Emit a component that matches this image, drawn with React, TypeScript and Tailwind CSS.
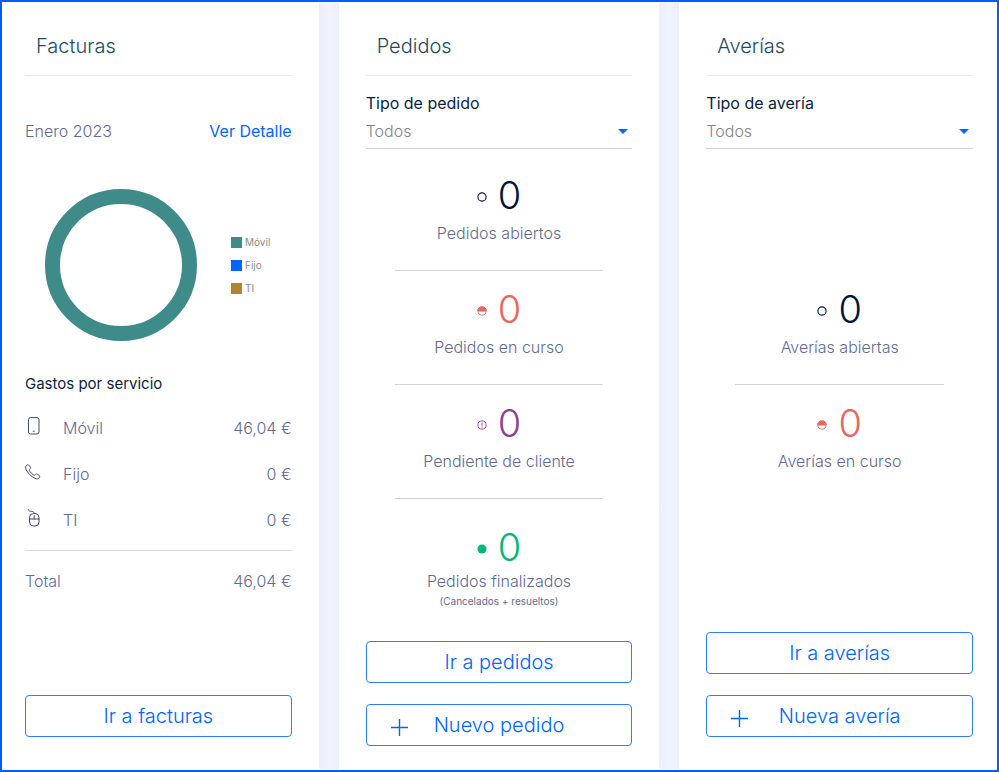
import * as React from "react"

type StatusKind = "open" | "progress" | "waiting" | "done"

interface Stat {
  kind: StatusKind
  value: number
  label: string
  note?: string
}

const ORDER_STATS: Stat[] = [
  { kind: "open", value: 0, label: "Pedidos abiertos" },
  { kind: "progress", value: 0, label: "Pedidos en curso" },
  { kind: "waiting", value: 0, label: "Pendiente de cliente" },
  { kind: "done", value: 0, label: "Pedidos finalizados", note: "(Cancelados + resueltos)" },
]

const FAULT_STATS: Stat[] = [
  { kind: "open", value: 0, label: "Averías abiertas" },
  { kind: "progress", value: 0, label: "Averías en curso" },
]

const STATUS_COLORS: Record<StatusKind, string> = {
  open: "text-[#00143a]",
  progress: "text-[#e9665e]",
  waiting: "text-[#8f3f97]",
  done: "text-[#00b67a]",
}

const SERVICES = [
  { name: "Móvil", amount: "46,04 €", icon: <MobileIcon /> },
  { name: "Fijo", amount: "0 €", icon: <PhoneIcon /> },
  { name: "TI", amount: "0 €", icon: <MouseIcon /> },
]

const LEGEND = [
  { name: "Móvil", swatch: "bg-[#3f8b8a]" },
  { name: "Fijo", swatch: "bg-[#0066ff]" },
  { name: "TI", swatch: "bg-[#b0862b]" },
]

export default function App() {
  return (
    <main className="flex min-h-screen border-2 border-[#005eff] bg-white py-px font-['Inter',sans-serif] text-base font-light text-[#5f6b90]">
      <section className="flex flex-1 flex-col bg-white pr-[27px] pb-8 pl-[23px]">
        <CardTitle>Facturas</CardTitle>
        <Invoices />
        <div className="mt-auto pt-6">
          <ActionButton>Ir a facturas</ActionButton>
        </div>
      </section>
      <Gutter />
      <section className="flex flex-1 flex-col bg-white px-[27px] pb-[23px]">
        <CardTitle>Pedidos</CardTitle>
        <TypeSelect id="order-type" label="Tipo de pedido" />
        <div className="mt-2">
          <StatList stats={ORDER_STATS} />
        </div>
        <div className="mt-auto flex flex-col gap-[21px] pt-6">
          <ActionButton>Ir a pedidos</ActionButton>
          <ActionButton plus>Nuevo pedido</ActionButton>
        </div>
      </section>
      <Gutter />
      <section className="flex flex-1 flex-col bg-white pr-6 pb-8 pl-[27px]">
        <CardTitle>Averías</CardTitle>
        <TypeSelect id="fault-type" label="Tipo de avería" />
        <div className="mt-[122px]">
          <StatList stats={FAULT_STATS} />
        </div>
        <div className="mt-auto flex flex-col gap-[21px] pt-6">
          <ActionButton>Ir a averías</ActionButton>
          <ActionButton plus>Nueva avería</ActionButton>
        </div>
      </section>
    </main>
  )
}

function Gutter() {
  return (
    <div
      className="w-5 flex-none bg-linear-to-r from-[#eceefc] via-[#f1f3ff] to-[#eceefc]"
      aria-hidden
    />
  )
}

function CardTitle({ children }: { children: React.ReactNode }) {
  return (
    <h2 className="border-b border-[#eaeaea] px-[11px] pt-[29px] pb-[15px] text-xl leading-7 text-[#1f4a5e]">
      {children}
    </h2>
  )
}

function Invoices() {
  return (
    <>
      <div className="mt-[43px] flex items-center justify-between leading-6">
        <span>Enero 2023</span>
        <a href="#detalle" className="font-normal text-[#0066ff]">
          Ver Detalle
        </a>
      </div>

      <div className="mt-[46px] flex items-center gap-[34px] pl-5">
        <svg className="size-[152px] flex-none" viewBox="0 0 152 152" aria-hidden>
          <circle cx="76" cy="76" r="68.5" fill="none" stroke="#3f8b8a" strokeWidth="15" />
        </svg>
        <ul className="flex flex-col gap-[7px] text-[10px] leading-4 font-normal text-[#8b8b8b]">
          {LEGEND.map((item) => (
            <li key={item.name} className="flex items-center gap-[3px]">
              <span className={`size-[11px] ${item.swatch}`} />
              {item.name}
            </li>
          ))}
        </ul>
      </div>

      <h3 className="mt-[31px] text-[15px] leading-6 font-normal text-[#0b1f3f]">
        Gastos por servicio
      </h3>
      <table className="mt-[9px] w-full">
        <tbody>
          {SERVICES.map((service) => (
            <tr key={service.name} className="h-[46px]">
              <td className="w-[38px] pb-1 text-[#3c4c6a]">{service.icon}</td>
              <th scope="row" className="text-left font-light">
                {service.name}
              </th>
              <td className="text-right">{service.amount}</td>
            </tr>
          ))}
        </tbody>
      </table>
      <div className="mt-[7px] flex justify-between border-t border-[#dcdcdc] pt-[18px] leading-6">
        <span>Total</span>
        <span>46,04 €</span>
      </div>
    </>
  )
}

function TypeSelect({ id, label }: { id: string; label: string }) {
  return (
    <div className="border-b border-[#d4d4d4] pt-[15px]">
      <label htmlFor={id} className="block leading-6 font-normal text-[#0b1f3f]">
        {label}
      </label>
      <div className="relative pb-px">
        <select
          id={id}
          className="h-8 w-full appearance-none bg-transparent text-base font-light text-[#838383] outline-none"
        >
          <option>Todos</option>
        </select>
        <svg
          className="pointer-events-none absolute top-[14px] right-1 h-[5px] w-[10px]"
          viewBox="0 0 10 5"
          aria-hidden
        >
          <path d="M0 0h10L5 5z" fill="#0066ff" />
        </svg>
      </div>
    </div>
  )
}

function StatList({ stats }: { stats: Stat[] }) {
  return (
    <ul className="mx-[29px] divide-y divide-[#d4d4d4]">
      {stats.map((stat) => (
        <li
          key={stat.label}
          className={`text-center ${stat.note ? "pt-7" : "pt-[18px] pb-[23px]"}`}
        >
          <div
            className={`flex items-center justify-center gap-[11px] text-[38px] leading-10 ${STATUS_COLORS[stat.kind]}`}
          >
            <StatusIcon kind={stat.kind} />
            {stat.value}
          </div>
          <p className={stat.note ? "pt-[2px] leading-6" : "pt-1 leading-7"}>{stat.label}</p>
          {stat.note && <p className="text-[10px] leading-4 font-normal">{stat.note}</p>}
        </li>
      ))}
    </ul>
  )
}

function StatusIcon({ kind }: { kind: StatusKind }) {
  return (
    <svg className="mt-1 size-[10px]" viewBox="0 0 10 10" fill="none" stroke="currentColor" aria-hidden>
      {kind === "done" ? (
        <circle cx="5" cy="5" r="4.5" fill="currentColor" stroke="none" />
      ) : (
        <circle cx="5" cy="5" r="4.1" strokeWidth={kind === "open" ? 1.1 : 0.9} />
      )}
      {kind === "progress" && <path d="M.9 5a4.1 4.1 0 0 1 8.2 0z" fill="currentColor" />}
      {kind === "waiting" && <path d="M5 2.4v3.4M5 6.6v1" strokeWidth="0.9" />}
    </svg>
  )
}

function ActionButton({ plus, children }: { plus?: boolean; children: React.ReactNode }) {
  return (
    <button
      type="button"
      className="relative h-[42px] w-full rounded border border-[#2d7dff] text-xl text-[#0066ff]"
    >
      {plus && (
        <svg
          className="absolute top-[14px] left-6 size-[17px]"
          viewBox="0 0 17 17"
          stroke="currentColor"
          strokeWidth="1.4"
          aria-hidden
        >
          <path d="M8.5 0v17M0 8.5h17" />
        </svg>
      )}
      {children}
    </button>
  )
}

function MobileIcon() {
  return (
    <svg className="size-[18px]" viewBox="0 0 18 18" fill="none" stroke="currentColor" aria-hidden>
      <rect x="3.500" y=".6" width="10.500" height="16.400" rx="2" />
      <path d="M8.200 14.200h1.100" strokeLinecap="round" />
    </svg>
  )
}

function PhoneIcon() {
  return (
    <svg
      className="size-4"
      viewBox="0 0 18 18"
      fill="none"
      stroke="currentColor"
      strokeWidth="1.1"
      aria-hidden
    >
      <path
        d="M2 1.3C3 .5 4.200.8 4.800 1.800L5.900 3.700c.5.900.2 1.700-.5 2.300-.7.600-.6 1.200-.1 2 1.100 1.700 2.500 3.200 4.200 4.200.9.500 1.500.5 2-.1.600-.8 1.500-1 2.400-.5l1.800 1.100c1 .600 1.200 1.800.4 2.700-1.200 1.300-2.900 1.600-4.700.8C6.800 14.100 3.200 10.400 1.100 5.900.3 4.100.7 2.400 2 1.300z"
        strokeLinejoin="round"
      />
    </svg>
  )
}

function MouseIcon() {
  return (
    <svg className="size-[18px]" viewBox="0 0 18 18" fill="none" stroke="currentColor" aria-hidden>
      <rect x="4.500" y="4.500" width="9.500" height="12.500" rx="4" />
      <path
        d="M4.500 10h9.500M9.200 6.500v3.500M9.200 4.500C9.200 3 8.200 2.400 6.700 2.400 5 2.400 3.700 2 3.300.6"
        strokeLinecap="round"
      />
    </svg>
  )
}
